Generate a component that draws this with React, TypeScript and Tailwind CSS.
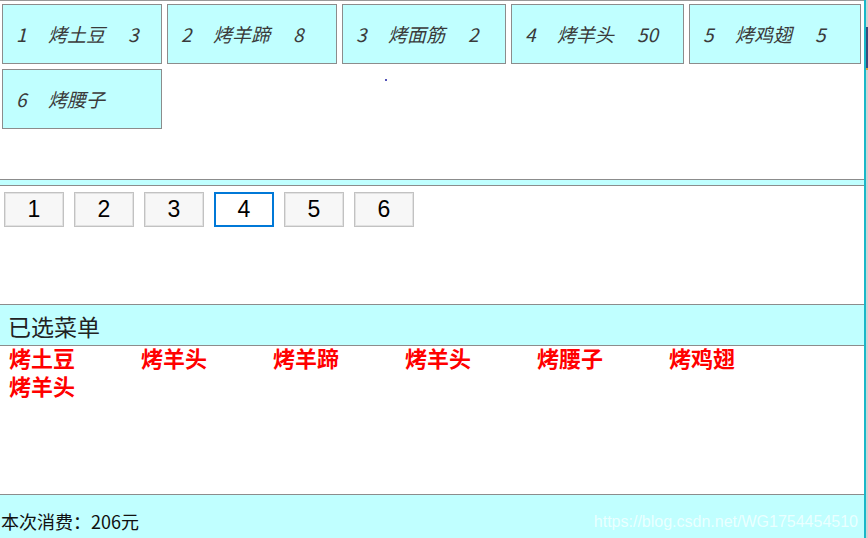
import { useState } from 'react';

type Dish = { id: number; name: string; price: number; w: string };

const dishes: Dish[] = [
  { id: 1, name: '烤土豆', price: 3, w: 'w-[160px]' },
  { id: 2, name: '烤羊蹄', price: 8, w: 'w-[170px]' },
  { id: 3, name: '烤面筋', price: 2, w: 'w-[164px]' },
  { id: 4, name: '烤羊头', price: 50, w: 'w-[173px]' },
  { id: 5, name: '烤鸡翅', price: 5, w: 'w-[172px]' },
  { id: 6, name: '烤腰子', price: 0, w: 'w-[160px]' },
];

const picked = ['烤土豆', '烤羊头', '烤羊蹄', '烤羊头', '烤腰子', '烤鸡翅', '烤羊头'];

const cjk = "font-['Noto_Sans_CJK_SC',sans-serif]";

export default function App() {
  const [active, setActive] = useState(4);

  return (
    <div className="flex w-[868px] h-[538px] overflow-hidden bg-white">
      <div className="w-[864px] flex flex-col">
        {/* dish cards */}
        <div className="relative h-[179px] border-t border-[#999] pt-[3px] pl-[2px]">
          <div className="flex flex-wrap gap-[5px]">
            {dishes.map(d => (
              <div
                key={d.id}
                className={`${d.w} h-[60px] border border-[#8c8c8c] bg-[#c0ffff] flex items-center pt-[1px] pl-[13px] italic text-[19px] text-[#3a3a3a] ${cjk}`}
              >
                <span className="w-[32px]">{d.id}</span>
                <span>{d.name}</span>
                {d.id !== 6 && <span className="ml-[23px]">{d.price}</span>}
              </div>
            ))}
          </div>
          <span className="absolute left-[385px] top-[78px] w-[2px] h-[2px] rounded-full bg-[#1a1aa0]" />
        </div>

        <div className="h-[7px] border-y border-[#8c8c8c] bg-[#c0ffff]" />

        {/* number buttons */}
        <div className="h-[118px] pt-[6px] pl-[4px] flex gap-[10px] items-start">
          {dishes.map(d => (
            <button
              key={d.id}
              onClick={() => setActive(d.id)}
              className={
                active === d.id
                  ? "w-[60px] h-[35px] border-2 border-[#0078d7] bg-white text-[23px] leading-none text-black font-['Liberation_Sans',sans-serif]"
                  : "w-[60px] h-[35px] border border-[#c2c2c2] shadow-[inset_0_0_0_1px_#e2e2e2] bg-[#f7f7f7] text-[23px] leading-none text-black font-['Liberation_Sans',sans-serif]"
              }
            >
              {d.id}
            </button>
          ))}
        </div>

        {/* selected header */}
        <div className={`h-[42px] border-y border-[#8c8c8c] bg-[#c0ffff] flex items-center pl-[8px] pt-[3px] text-[23px] text-[#222] ${cjk}`}>
          已选菜单
        </div>

        {/* selected list */}
        <div className={`h-[148px] pl-[9px] -mt-[3px] text-[22px] leading-[28px] font-bold text-[#ff0000] ${cjk}`}>
          {picked.map((p, i) => (
            <span key={i} className="inline-block w-[132px]">{p}</span>
          ))}
        </div>

        {/* footer */}
        <div className="h-[44px] mt-[3px] border-t border-[#8c8c8c] bg-[#c0ffff] flex items-center justify-between pt-[10px] pr-[6px]">
          <span className={`text-[18px] text-[#111] pl-[1px] ${cjk}`}>本次消费：206元</span>
          <span className="text-[16px] text-white/70 font-['Liberation_Sans',sans-serif]">
            https://blog.csdn.net/WG1754454510
          </span>
        </div>
      </div>

      <div className="w-[2px] bg-[#19b8c8]" />
      <div className="w-[2px] flex flex-col bg-[#d2d2d2]">
        <div className="h-[27px]" />
        <div className="h-[41px] bg-[#3c4a78]" />
        <div className="h-[2px] bg-[#e0a040]" />
      </div>
    </div>
  );
}
